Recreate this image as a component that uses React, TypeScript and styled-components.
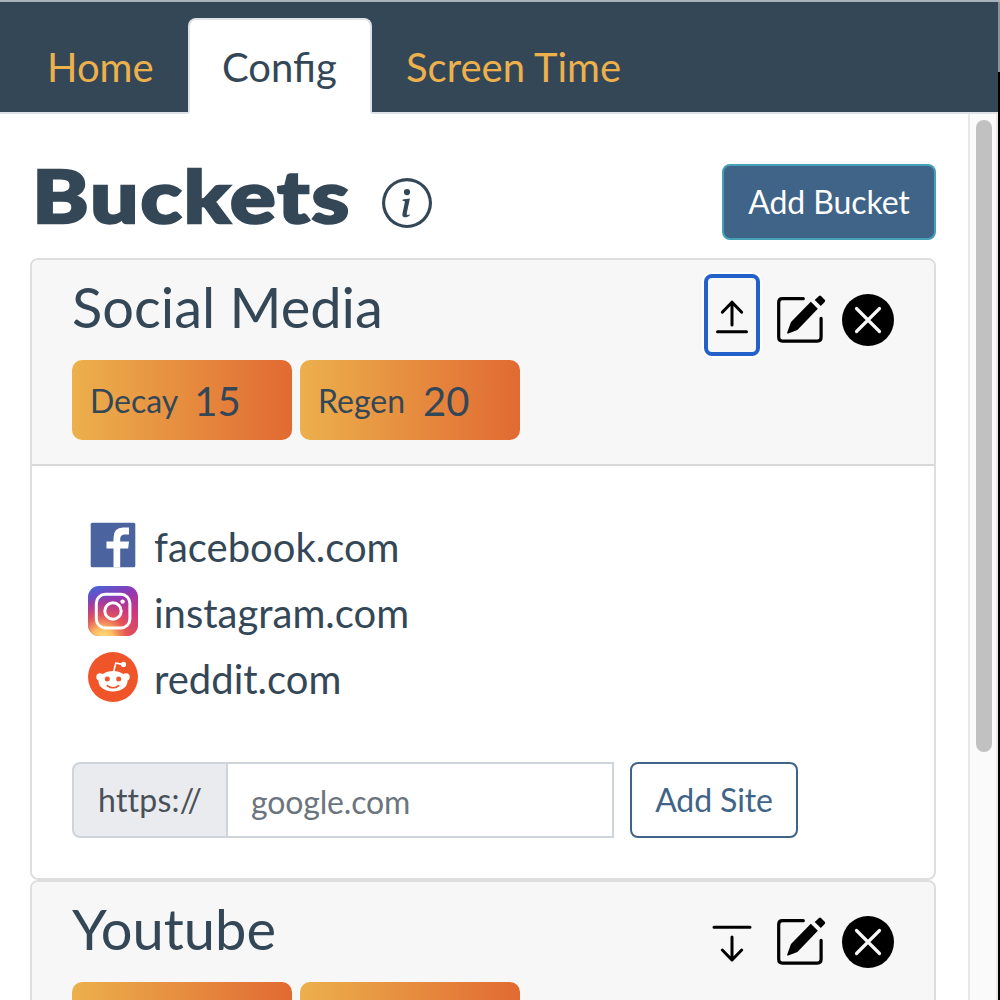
import React from "react";
import styled, { createGlobalStyle } from "styled-components";
import { BsInfoCircle } from "react-icons/bs";

const GlobalStyle = createGlobalStyle`
  * { box-sizing: border-box; }
  body {
    margin: 0;
    overflow: hidden;
    background: #000;
    color: #344757;
    font-family: Lato, "Liberation Sans", sans-serif;
    font-size: 32px;
    line-height: 1.5;
  }
`;

const Screen = styled.div`
  display: flex;
  height: 1000px;
  padding-top: 2px;
  background: linear-gradient(#a7b3bb 0 2px, #8b9298 2px 72px, #000 72px);
  overflow: hidden;
`;

const Popup = styled.div`
  width: 998px;
  display: flex;
  flex-direction: column;
`;

const Nav = styled.nav`
  display: flex;
  flex-shrink: 0;
  align-items: flex-end;
  height: 112px;
  padding-left: 13px;
  background: linear-gradient(to top, #dee2e6 2px, #344757 2px);
`;

const Tab = styled.a<{ $active?: boolean; $width?: number }>`
  width: ${(p) => (p.$width ? `${p.$width}px` : "auto")};
  height: 96px;
  padding: 17px 0 0 32px;
  border: 2px solid;
  border-color: ${(p) => (p.$active ? "#dee2e6 #dee2e6 #fff" : "transparent")};
  border-radius: 8px 8px 0 0;
  background: ${(p) => (p.$active ? "#fff" : "transparent")};
  color: ${(p) => (p.$active ? "#344757" : "#ecb04c")};
  font-size: 40px;
  line-height: 60px;
  white-space: nowrap;
`;

const Viewport = styled.div`
  display: flex;
  flex: 1;
  min-height: 0;
`;

const Content = styled.main`
  width: 968px;
  padding: 50px 32px 0 30px;
  background: #fff;
  overflow: hidden;
`;

const Track = styled.div`
  width: 30px;
  padding: 6px 4px 0 6px;
  border: 0 solid #e8e8e8;
  border-width: 0 2px;
  background: #fafafa;
`;

const Thumb = styled.div`
  width: 16px;
  height: 632px;
  border-radius: 8px;
  background: #c1c1c1;
`;

const TitleRow = styled.header`
  display: flex;
  align-items: center;
  height: 76px;
  margin-bottom: 18px;
`;

const Title = styled.h1`
  width: 352px;
  margin: 0;
  padding: 0 0 15px 2px;
  font-size: 73px;
  font-weight: 900;
  line-height: 76px;
  letter-spacing: 1.8px;
  -webkit-text-stroke: 2.5px #344757;
  transform: scaleX(1.165);
  transform-origin: left;
`;

const InfoIcon = styled(BsInfoCircle)`
  width: 50px;
  height: 50px;
  margin-top: 2px;
`;

const Button = styled.button<{ $filled?: boolean }>`
  height: 76px;
  padding: 0;
  border: 2px solid ${(p) => (p.$filled ? "#46a0b5" : "#3f6487")};
  border-radius: 8px;
  background: ${(p) => (p.$filled ? "#3f6487" : "#fff")};
  color: ${(p) => (p.$filled ? "#fff" : "#3f6487")};
  font: inherit;
  white-space: nowrap;
`;

const AddBucket = styled(Button)`
  width: 214px;
  margin-left: auto;
  letter-spacing: -0.1px;
`;

const AddSite = styled(Button)`
  width: 168px;
  margin-left: 16px;
  letter-spacing: -0.1px;
`;

const Card = styled.section`
  border: 2px solid #dedede;
  border-radius: 8px;
  background: #fff;
  overflow: hidden;
`;

const CardHeader = styled.div`
  display: flex;
  justify-content: space-between;
  height: 206px;
  padding: 12px 40px 0;
  border-bottom: 2px solid #d8d8d8;
  background: #f7f7f7;
`;

const BucketName = styled.h2`
  margin: 0 0 19px;
  padding-top: 1px;
  font-size: 56px;
  font-weight: 400;
  line-height: 68px;
`;

const Stats = styled.div`
  display: flex;
  gap: 8px;
`;

const Stat = styled.div<{ $gap?: number }>`
  display: flex;
  align-items: center;
  gap: ${(p) => p.$gap}px;
  width: 220px;
  height: 80px;
  padding: 2px 0 0 18px;
  border-radius: 10px;
  background: linear-gradient(to right, #ecb04c, #e16a32);
`;

const StatValue = styled.span`
  font-size: 40px;
`;

const Actions = styled.div`
  display: flex;
  gap: 17px;
  height: 82px;
  margin-top: 2px;
`;

const IconButton = styled.button<{ $focused?: boolean; $plain?: boolean; $width: number }>`
  display: flex;
  align-items: center;
  justify-content: center;
  width: ${(p) => p.$width}px;
  height: 82px;
  padding: ${(p) => (p.$plain ? "10px 0 0" : 0)};
  border: ${(p) => (p.$plain ? 0 : 4)}px solid ${(p) => (p.$focused ? "#2161c9" : "transparent")};
  border-radius: 8px;
  background: none;
  box-shadow: ${(p) => (p.$focused ? "0 0 0 2px #fff" : "none")};
  color: #000;

  svg { flex-shrink: 0; }
`;

const CardBody = styled.div`
  height: 412px;
  padding: 52px 40px 0;
`;

const SiteList = styled.ul`
  margin: 0;
  padding: 0 0 0 16px;
  list-style: none;
`;

const Site = styled.li`
  display: flex;
  gap: 16px;
  height: 66px;
  font-size: 40px;
  line-height: 58px;

  svg { margin-top: 2px; }
`;

const AddRow = styled.form`
  display: flex;
  margin-top: 46px;
`;

const Prefix = styled.span`
  width: 156px;
  height: 76px;
  padding-left: 24px;
  border: 2px solid #ced4da;
  border-radius: 8px 0 0 8px;
  background: #e9ebef;
  color: #495057;
  line-height: 72px;
  letter-spacing: 0.25px;
  font-variant-ligatures: none;
`;

const SiteInput = styled.input`
  width: 386px;
  height: 76px;
  padding: 3px 22px 0 23px;
  border: 2px solid #ced4da;
  border-left: 0;
  border-radius: 0;
  background: #fff;
  font: inherit;
  letter-spacing: -0.15px;

  &::placeholder { color: #6c757d; opacity: 1; }
`;

const CollapseIcon = () => (
  <svg width="48" height="74" viewBox="708 278 48 74" fill="none" stroke="currentColor" strokeWidth="3" strokeLinecap="round" strokeLinejoin="round">
    <path d="M717.5 331.7H746.5M732 325V302M722.3 312.2L732 302.3L741.7 312.2" />
  </svg>
);

const ExpandIcon = () => (
  <svg width="48" height="74" viewBox="708 278 48 74" fill="none" stroke="currentColor" strokeWidth="3" strokeLinecap="round" strokeLinejoin="round">
    <path d="M714 305.3H750M732 315V338M722.3 328L732 338L741.7 328" />
  </svg>
);

const EditIcon = () => (
  <svg width="50" height="52" viewBox="776 294 50 52" fill="currentColor">
    <path d="M803.3 298.7H782.5Q778.7 298.7 778.7 302.5V337.3Q778.7 341.1 782.5 341.1H817.3Q821.1 341.1 821.1 337.3V318.3" fill="none" stroke="currentColor" strokeWidth="3.2" strokeLinecap="round" />
    <path d="M810.8 301.7L817.8 308.7L797.4 330L788.3 333.5Q786.8 334 787.2 332.4L791 322Z" />
    <path d="M819 296Q820 295 821 296L824.7 299.8Q825.7 300.9 824.7 302L820.8 306L814.7 299.9Z" />
  </svg>
);

const RemoveIcon = () => (
  <svg width="52" height="52" viewBox="0 0 52 52">
    <circle cx="26" cy="26" r="26" />
    <path d="M14.5 14.5L37.5 37.5M37.5 14.5L14.5 37.5" stroke="#f7f7f7" strokeWidth="3.2" strokeLinecap="round" />
  </svg>
);

const FacebookIcon = () => (
  <svg width="50" height="50" viewBox="0 0 50 50">
    <rect x="2.7" y="2.7" width="44.6" height="44.6" rx="1.5" fill="#4b639f" />
    <path d="M25.5 47.3V28.5H18.5V21.5H25.5V18Q25.5 7.5 35 7.5H41V14.5H37Q32.2 14.5 32.2 19V21.5H41L40.2 28.5H32.2V47.3Z" fill="#fff" />
  </svg>
);

const InstagramIcon = () => (
  <svg width="50" height="50" viewBox="0 0 50 50">
    <defs>
      <linearGradient id="igBase" x1="0.25" y1="0" x2="0.7" y2="1">
        <stop offset="0" stopColor="#4f5fd3" />
        <stop offset="0.3" stopColor="#8e38b6" />
        <stop offset="0.65" stopColor="#c93583" />
        <stop offset="1" stopColor="#d8486a" />
      </linearGradient>
      <radialGradient id="igGlow" cx="0.3" cy="1.05" r="0.85">
        <stop offset="0" stopColor="#ffe083" />
        <stop offset="0.25" stopColor="#fdbc62" />
        <stop offset="0.55" stopColor="#ea5c4e" stopOpacity="0.8" />
        <stop offset="1" stopColor="#d9366f" stopOpacity="0" />
      </radialGradient>
    </defs>
    <rect width="50" height="50" rx="11" fill="url(#igBase)" />
    <rect width="50" height="50" rx="11" fill="url(#igGlow)" />
    <g fill="none" stroke="#fff" strokeWidth="3">
      <rect x="8.3" y="8.3" width="33.6" height="33.6" rx="9" />
      <circle cx="25" cy="25" r="8.2" />
    </g>
    <circle cx="34.6" cy="15.6" r="2.2" fill="#fff" />
  </svg>
);

const RedditIcon = () => (
  <svg width="50" height="50" viewBox="0 0 50 50">
    <circle cx="25" cy="25" r="25" fill="#f05429" />
    <path d="M25.6 20L27.8 11L35.5 12.6" fill="none" stroke="#fff" strokeWidth="1.6" strokeLinejoin="round" />
    <g fill="#fff">
      <circle cx="35.5" cy="12.4" r="2.6" />
      <circle cx="12" cy="25" r="3.7" />
      <circle cx="38" cy="25" r="3.7" />
      <ellipse cx="25" cy="29.3" rx="14.5" ry="10.3" />
    </g>
    <circle cx="19.3" cy="27" r="2.5" fill="#f05429" />
    <circle cx="30.7" cy="27" r="2.5" fill="#f05429" />
    <path d="M19.4 33.7Q25 37.8 30.6 33.7" fill="none" stroke="#f05429" strokeWidth="1.7" strokeLinecap="round" />
  </svg>
);

interface BucketProps {
  name: string;
  open?: boolean;
  decay?: number;
  regen?: number;
  children?: React.ReactNode;
}

const Bucket = ({ name, open, decay, regen, children }: BucketProps) => (
  <Card>
    <CardHeader>
      <div>
        <BucketName>{name}</BucketName>
        <Stats>
          <Stat $gap={16}>{decay && <>Decay <StatValue>{decay}</StatValue></>}</Stat>
          <Stat $gap={18}>{regen && <>Regen <StatValue>{regen}</StatValue></>}</Stat>
        </Stats>
      </div>
      <Actions>
        <IconButton $width={56} $focused={open} aria-label="Toggle">
          {open ? <CollapseIcon /> : <ExpandIcon />}
        </IconButton>
        <IconButton $width={48} $plain aria-label="Edit"><EditIcon /></IconButton>
        <IconButton $width={52} $plain aria-label="Remove"><RemoveIcon /></IconButton>
      </Actions>
    </CardHeader>
    {children}
  </Card>
);

export default function App() {
  return (
    <Screen>
      <GlobalStyle />
      <Popup>
        <Nav>
          <Tab $width={175}>Home</Tab>
          <Tab $active $width={184}>Config</Tab>
          <Tab>Screen Time</Tab>
        </Nav>
        <Viewport>
          <Content>
            <TitleRow>
              <Title>Buckets</Title>
              <InfoIcon />
              <AddBucket $filled>Add Bucket</AddBucket>
            </TitleRow>
            <Bucket name="Social Media" open decay={15} regen={20}>
              <CardBody>
                <SiteList>
                  <Site><FacebookIcon />facebook.com</Site>
                  <Site><InstagramIcon />instagram.com</Site>
                  <Site><RedditIcon />reddit.com</Site>
                </SiteList>
                <AddRow>
                  <Prefix>https://</Prefix>
                  <SiteInput placeholder="google.com" />
                  <AddSite type="button">Add Site</AddSite>
                </AddRow>
              </CardBody>
            </Bucket>
            <Bucket name="Youtube" />
          </Content>
          <Track><Thumb /></Track>
        </Viewport>
      </Popup>
    </Screen>
  );
}
